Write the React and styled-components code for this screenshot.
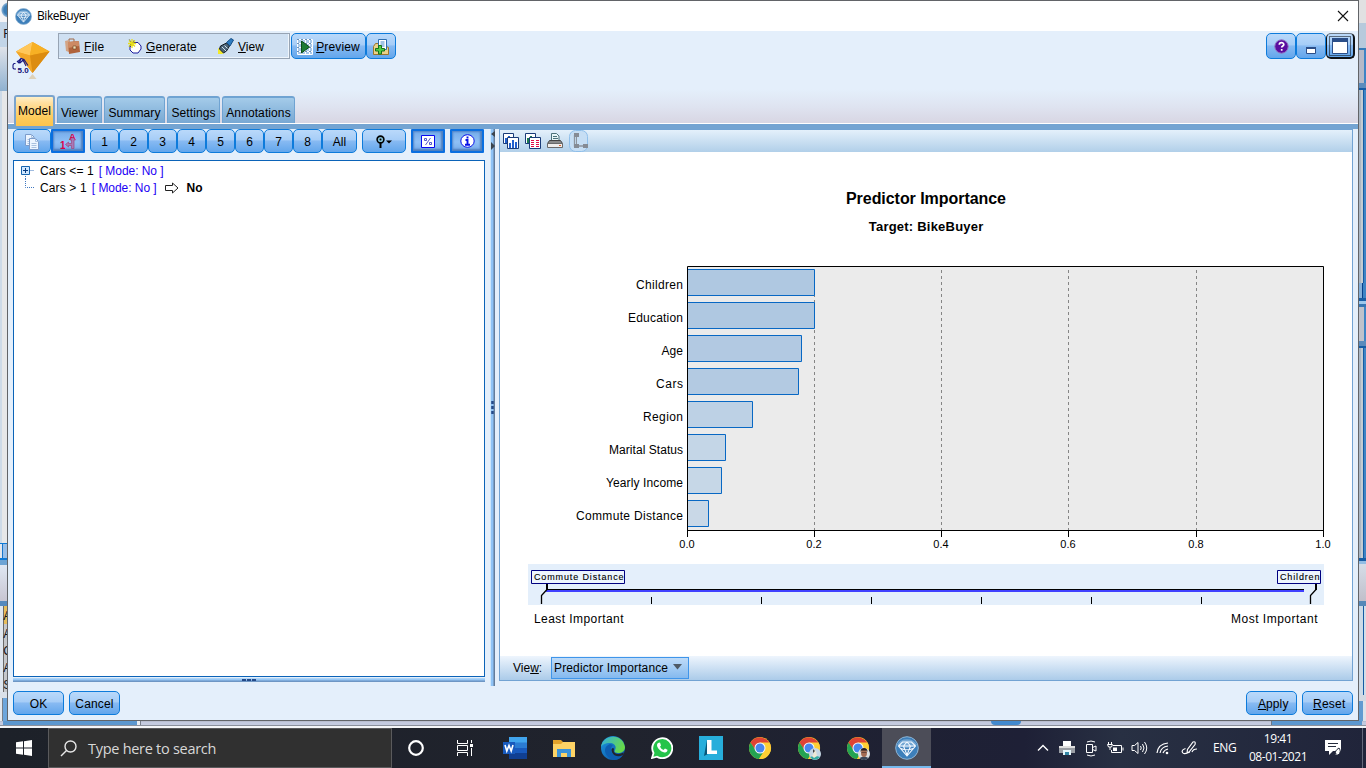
import React from "react";
import styled, { createGlobalStyle, css } from "styled-components";

const Global = createGlobalStyle`
  * { box-sizing: border-box; }
  html, body { margin: 0; padding: 0; overflow: hidden; }
  body { width: 1366px; height: 768px; background: #c6cbdd; }
  svg { display: block; flex: none; }
  button { margin: 0; }
`;

const ui = `"Liberation Sans", Arial, sans-serif`;
const segoe = `"Open Sans", "Noto Sans", sans-serif`;

const Desktop = styled.div`
  width: 1366px;
  height: 768px;
  display: grid;
  grid-template: 721px 7px 40px / 7px 1352px 7px;
  font: 12px/16px ${ui};
  color: #000;
`;

/* ---- slices of the main window left visible round the dialog ---- */
const Strip = styled.div`
  display: flex;
  flex-direction: column;
  overflow: hidden;
  ${(p) => p.$right && css`box-shadow: inset 1px 0 0 #59626e;`}
`;
const Slice = styled.div`
  flex: none;
  height: ${(p) => p.$h}px;
  background: ${(p) => p.$bg};
  color: #12151c;
  overflow: hidden;
  line-height: ${(p) => (p.$h > 20 ? 24 : 20)}px;
`;
const BottomStrip = styled.div`
  grid-column: 1 / 4;
  display: flex;
  height: 7px;
  border-bottom: 2px solid #f4f5f8;
  background: linear-gradient(#b9bed0 0 1px, #c4cadf 1px 4px, #8b909c 4px 5px);
`;
const BottomPiece = styled.i`
  width: ${(p) => p.$w}px;
  height: ${(p) => (p.$fill ? 4 : 5)}px;
  background: ${(p) => p.$fill || "transparent"};
  border-radius: ${(p) => (p.$round ? "0 0 5px 5px" : 0)};
`;

/* ---- dialog ---- */
const Dialog = styled.section`
  display: flex;
  flex-direction: column;
  border: 1px solid #626468;
  background: #e4effb;
`;
const TitleBar = styled.header`
  height: 30px;
  display: flex;
  align-items: center;
  background: #fff;
  padding: 0 9px 0 7px;
  font: 12px/16px ${segoe};
  letter-spacing: -0.45px;
  gap: 5px;
`;
const Spacer = styled.span`
  flex: 1;
`;
const Banner = styled.div`
  height: 93px;
  display: flex;
  flex-direction: column;
  border-bottom: 1px solid #fff;
  background: linear-gradient(#e4effb 0 58px, #dfe4f1 75px, #d8d6e3 92px);
`;
const CommandRow = styled.div`
  height: 64px;
  display: flex;
  align-items: flex-start;
  padding: 2px 3px 0 4px;
`;
const Emblem = styled.div`
  width: 46px;
  padding-top: 6px;
`;
const MenuBar = styled.nav`
  width: 232px;
  height: 26px;
  display: flex;
  align-items: center;
  border: 1px solid #97a4b4;
  box-shadow: inset -1px -1px 0 #eef5fc;
  background: #cfe0f2;
  padding-left: 6px;
  margin-right: 1px;
`;
const MenuItem = styled.span`
  display: flex;
  align-items: center;
  gap: 4px;
  width: ${(p) => p.$w}px;
  letter-spacing: ${(p) => p.$ls || 0}px;
  line-height: 16px;

  > span {
    padding-top: 2px;
  }
`;
const raised = css`
  border: 1px solid #0d7bdb;
  border-radius: 5px;
  background: linear-gradient(#bad9fa, #a6cdf7 45%, #88baf2 50%, #62a6ec);
`;
const sunken = css`
  border: 2px solid #0b6fe0;
  border-radius: 1px;
  background: linear-gradient(#74abea, #8fc0f5 55%, #75abe9);
  box-shadow: inset 1px 1px 2px #5083c6, inset -2px -2px 2px #4f7fbd;
`;
const Button = styled.button`
  flex: none;
  width: ${(p) => p.$w}px;
  height: ${(p) => p.$h || 24}px;
  padding: ${(p) => (p.$on ? 0 : "1px 0 0")};
  display: flex;
  align-items: center;
  justify-content: center;
  gap: 3px;
  font: 12px/16px ${ui};
  color: #000;
  letter-spacing: ${(p) => p.$ls || 0}px;
  ${(p) => (p.$on ? sunken : raised)}
  ${(p) => p.$focus && css`padding: 0; border: 1px solid #101418; border-width: 1px 2px 2px 1px; border-top-color: #6d7884;`}
`;
const TabRow = styled.div`
  display: flex;
  align-items: flex-end;
  height: 28px;
  padding-left: 6px;
  gap: 2px;
`;
const Tab = styled.div`
  flex: none;
  width: ${(p) => p.$w}px;
  height: 27px;
  border: 1px solid #6fa3d2;
  border-top-width: 2px;
  border-bottom: 0;
  border-radius: 3px 3px 0 0;
  background: linear-gradient(#a4cbe9, #78a8d3);
  text-align: center;
  white-space: nowrap;
  line-height: 31px;
  letter-spacing: 0.1px;
  ${(p) =>
    p.$active &&
    css`
      height: 31px;
      margin-bottom: -3px;
      position: relative;
      border: 2px solid #7aa3cd;
      border-bottom: 0;
      background: linear-gradient(#fff0c8, #ffe0a0 20%, #fdcb5c 70%, #fdc34c);
      line-height: 28px;
    `}
`;
const Rule = styled.div`
  height: 5px;
  background: #74a4d2;
`;
const Workspace = styled.main`
  height: 557px;
  display: flex;
  padding: 0 5px;
`;
const LeftPane = styled.div`
  width: 472px;
  display: flex;
  flex-direction: column;
`;
const TreeTools = styled.div`
  display: flex;
  height: 31px;
`;
const Group = styled.div`
  display: flex;
  margin-right: 5px;
`;
const TreeBox = styled.div`
  height: 517px;
  border: 1px solid #0b63b8;
  background: #fff;
  padding: 1px 0 0 6px;
`;
const TreeRow = styled.div`
  height: 17px;
  display: flex;
  align-items: center;
  white-space: pre;
`;
const TreeLabel = styled.span`
  margin-left: 6px;
  letter-spacing: ${(p) => p.$ls || 0}px;
`;
const Mode = styled.span`
  color: #1c00f4;
  margin: 0 8px 0 5px;
  letter-spacing: -0.05px;
`;
const Result = styled.b`
  margin-left: 8px;
`;
const HSplit = styled.div`
  height: 4px;
  margin-top: 1px;
  display: flex;
  justify-content: center;
  background: linear-gradient(#b8dbfb, #8fc1f2 2px, #6e96c4 3px);
`;
const VSplit = styled.div`
  width: 5px;
  margin: 0 4px 0 5px;
  background: linear-gradient(90deg, #cbe6fc 0 1px, #8fc3f6 1px 3px, #647d9b 4px);
`;
const ChartPane = styled.div`
  flex: 1;
  height: 552px;
  display: flex;
  flex-direction: column;
  border: 1px solid #72a3d3;
  background: #fff;
`;
const ChartTools = styled.div`
  height: 22px;
  display: flex;
  align-items: center;
  padding-left: 3px;
  gap: 6px;
  background: linear-gradient(#e4f0fb, #b1cfe9);
`;
const ViewBar = styled.div`
  height: 24px;
  display: flex;
  align-items: center;
  padding-left: 13px;
  background: linear-gradient(#eef5fd, #abcbe9);
`;
const ViewLabel = styled.span`
  width: 38px;
`;
const Combo = styled.div`
  width: 138px;
  height: 22px;
  display: flex;
  align-items: center;
  justify-content: space-between;
  padding: 0 6px 0 2px;
  white-space: nowrap;
  letter-spacing: 0.14px;
  border: 1px solid #3f95ea;
  background: linear-gradient(#bfdbf8, #a2cbf4 50%, #84b9ef);
`;
const Footer = styled.footer`
  height: 34px;
  padding: 5px;
  display: flex;
  gap: 5px;
`;

/* ---- taskbar ---- */
const Taskbar = styled.footer`
  grid-column: 1 / 4;
  display: flex;
  height: 40px;
  color: #fff;
  font: 12px/18px ${segoe};
  background: linear-gradient(90deg, #1d2129, #20232d 45%, #1e2036 75%, #283043 82%, #20243a);
`;
const Cell = styled.div`
  flex: none;
  width: ${(p) => p.$w || 49}px;
  height: 40px;
  display: flex;
  align-items: center;
  justify-content: center;
  ${(p) => p.$active && css`background: #4c4d58; border-bottom: 2px solid #76b9ed; padding-top: 1px;`}
`;
const Search = styled.div`
  width: 344px;
  display: flex;
  align-items: center;
  padding: 1px 0 0 11px;
  gap: 10px;
  border: 1px solid #5a5a5c;
  background: #303030;
  color: #d8d8d8;
  font: 14.5px/20px ${segoe};
  letter-spacing: -0.28px;
`;
const Lang = styled.span`
  width: 38px;
  padding-left: 9px;
  line-height: 40px;
  letter-spacing: -0.35px;
`;
const Clock = styled.div`
  width: 72px;
  text-align: center;
  padding-top: 2px;
  letter-spacing: -0.45px;
  white-space: pre;
`;
const DesktopEdge = styled.span`
  width: 4px;
  margin-left: 10px;
  border-left: 1px solid #64687a;
`;

/* ---- drawings ---- */
const Svg = ({ w, h, children, vb, ...r }) => (
  <svg width={w} height={h} viewBox={vb || `0 0 ${w} ${h}`} fill="none" {...r}>{children}</svg>
);

const GemBadge = ({ s }) => (
  <Svg w={s} h={s} vb="0 0 24 24">
    <circle cx="12" cy="12" r="11.3" fill="#3d7fba" stroke="#8fb4d3" strokeWidth="1" />
    <path d="M2 9a11 10 0 0 1 20 0Q12 15 2 9Z" fill="#74a7d3" />
    <path d="M7.500 6h9l4 4-8.500 10L3.500 10zM3.500 10h17M12 6l-3.500 4L12 19l3.500-9zM6 12.500q6 2.500 12 0" stroke="#f2f8ff" strokeWidth="1.100" />
  </Svg>
);
const Nugget = () => (
  <Svg w={40} h={42}>
    <path d="M20.500 3 4 12.500 20.500 34z" fill="#f6a51d" />
    <path d="M20.500 3 37.500 12.500 20.500 34z" fill="#e79412" />
    <path d="M20.500 3 4 12.500l14 4z" fill="#ffc75a" />
    <path d="M20.500 3 37.500 12.500l-19.500 4z" fill="#f7b024" />
    <path d="M4 12.500l14 4 2.500 17.500z" fill="#f3a728" />
    <path d="M18 16.500l19.500-4-17 21.500z" fill="#dc8c10" />
    <path d="M20.500 35l-4 5h8z" fill="#ddd1b8" />
    <path d="M3.500 24.500H2l-1 1.500v3l1 1h2M6 22.500l3-3 3 1 4 6M9 19.500l-2 5M8 24l3-3 3 6M5 22l2 2" stroke="#181883" strokeWidth="1.100" />
    <text x="5.500" y="34" fontFamily="Liberation Sans" fontSize="8" fontWeight="700" fill="#101076">5.0</text>
  </Svg>
);
const Bag = () => (
  <Svg w={15} h={16}>
    <path d="M4 4V1h5v3" stroke="#a06a48" />
    <path d="M0 3l4-1v12l-3-1z" fill="#d3a486" />
    <path d="M3 4l11-1 1 11-11 2z" fill="#b0633c" />
    <path d="M3 4l11-1v5l-11 2z" fill="#cd8a64" />
    <path d="M8 8h3v3H8z" fill="#f0dfb5" stroke="#71401f" strokeWidth=".6" />
  </Svg>
);
const Spark = () => (
  <Svg w={14} h={15}>
    <path d="M6 3.500h4l3 3.500v3l-3 4H5l-3-3V8z" fill="#fff" stroke="#1b1b9d" />
    <path d="M4 0v9M0 4.500h8M1 1.500l6 6M7 1.500l-6 6" stroke="#e9df1d" strokeWidth="1.300" />
    <path d="M1 0l2 3M6 1l-1 3M1 8l2-3" stroke="#625f23" strokeWidth=".5" />
  </Svg>
);
const Torch = () => (
  <Svg w={16} h={16}>
    <path d="M0 10l6 5-2 1H0z" fill="#f2e929" />
    <path d="M2.500 8l6-3 3 3-3 5-3 2-4-4z" fill="#4c6478" stroke="#111b25" />
    <path d="M8.500 4.500L13 .5l2.500 1.500L12 8z" fill="#2f7cc0" stroke="#154d84" />
    <path d="M4 9l4 4M6.500 7.500l3 3" stroke="#d2e0ec" />
  </Svg>
);
const PreviewIcon = () => (
  <Svg w={16} h={16}>
    <path d="M.5.5h15v15H.5zM1 4.5h15M1 8.5h15M1 12.5h15M4.5 1v15M8.500 1v15M12.500 1v15" fill="#a9c9ea" stroke="#fff" />
    <path d="M0 .5h16M0 4.500h16M0 8.500h16M0 12.500h16" stroke="#6e91b5" strokeDasharray="2 2" />
    <path d="M4.500 2l8 6-8 6z" fill="#1c7c35" stroke="#0b4d1a" />
  </Svg>
);
const AddNode = () => (
  <Svg w={16} h={16}>
    <path d="M.5 7.500l2-3h3v3h8l2 1v7H.5z" fill="#ead28a" stroke="#9b762a" />
    <path d="M5.500.500h8v10h-8z" fill="#fff" stroke="#2c6eb0" />
    <path d="M7.500 3h4M7.500 5h4M7.500 7h4" stroke="#4589ca" />
    <path d="M5.500 6.500h3v3h3v2.500h-3v3h-3v-3h-3V9.500h3z" fill="#52cf43" stroke="#16701a" />
  </Svg>
);
const Help = () => (
  <Svg w={15} h={15}>
    <circle cx="7.500" cy="7.500" r="6.700" fill="#5a0ca0" stroke="#9176c0" />
    <path d="M5.300 5.800C5.300 2.800 9.800 3 9.800 5.500c0 1.500-2.100 1.500-2.100 3.100M7.700 10v1.700" stroke="#fff" strokeWidth="1.700" />
  </Svg>
);
const WinMin = () => (
  <Svg w={10} h={14}>
    <path d="M.5 7.500h9v6h-9z" fill="#fff" stroke="#2b4e88" />
    <path d="M0 8h10" stroke="#2b4e88" strokeWidth="2" />
  </Svg>
);
const WinMax = () => (
  <Svg w={22} h={20}>
    <path d="M.5.5h21v19H.5z" stroke="#000" strokeDasharray="1 1" />
    <path d="M3.500 2.500h15v15h-15z" fill="#fff" stroke="#2b4e88" />
    <path d="M3 2h16v4H3z" fill="#2b4e88" />
  </Svg>
);
const Pages = () => (
  <Svg w={15} h={16}>
    {[[0.5, 0.5], [4.5, 4.5]].map(([x, y]) => (
      <g key={x} transform={`translate(${x} ${y})`}>
        <path d="M0 0h6l3 3v8H0z" fill="#edf5ff" stroke="#7c9ccb" />
        <path d="M6 0v3h3M2 5h5M2 7h5M2 9h5" stroke="#a9c1df" />
      </g>
    ))}
  </Svg>
);
const Rank = () => (
  <Svg w={17} h={18}>
    <text x="0" y="16.500" fontFamily="Liberation Sans" fontSize="10" fontWeight="700" fill="#de0048">1</text>
    <text x="9" y="7.500" fontFamily="Liberation Sans" fontSize="9.500" fontWeight="700" fill="#de0048">A</text>
    <path d="M5.500 12.500l3-2.500v1.500h3V8h-1.500L13 5.500 15.500 8H14v8.500h-2.500v-3h-3V15z" fill="#a67ab8" stroke="#a0457c" strokeWidth=".7" />
  </Svg>
);
const Pin = () => (
  <Svg w={16} h={14}>
    <circle cx="4.500" cy="4.500" r="3.400" fill="#81bdd5" stroke="#000" strokeWidth="1.600" />
    <circle cx="4.500" cy="4.500" r="1" fill="#000" />
    <path d="M4.500 8v5" stroke="#000" strokeWidth="2" />
    <path d="M10 5.500h6L13 8.500z" fill="#000" />
  </Svg>
);
const Percent = () => (
  <Svg w={14} h={13}>
    <path d="M.5.5h13v12H.5z" fill="#fff" stroke="#0908ef" />
    <path d="M9.500 3l-5 7M3.500 3.500h2v2h-2zM8.500 7.500h2v2h-2z" stroke="#4444c4" strokeWidth=".9" />
  </Svg>
);
const Info = () => (
  <Svg w={15} h={14}>
    <ellipse cx="7.500" cy="7" rx="6.700" ry="6.300" fill="#fff" stroke="#0710e7" />
    <path d="M7.500 2.500v2M5.500 6h2v4.500M5 10.700h5" stroke="#0710e7" strokeWidth="1.900" />
  </Svg>
);
const Expander = () => (
  <Svg w={14} h={17}>
    <path d="M1.500 4.500h8v8h-8z" fill="#cfe7ff" stroke="#1664ae" />
    <path d="M3 8.500h5M5.500 6v5" stroke="#073c80" />
    <path d="M10.500 8.500H14" stroke="#3f77bf" strokeDasharray="1 1" />
    <path d="M5.500 14v3" stroke="#3f77bf" strokeDasharray="1 1" />
  </Svg>
);
const Elbow = () => (
  <Svg w={14} h={17}><path d="M5.500 0v8.500H14" stroke="#3f77bf" strokeDasharray="1 1" /></Svg>
);
const ResultArrow = () => (
  <Svg w={14} h={12}><path d="M.5 3.500h7V1l5.500 5-5.500 5V8.500h-7z" fill="#fff" stroke="#222" /></Svg>
);
const BarsIcon = ({ table }) => (
  <Svg w={16} h={16}>
    <path d="M.5.5h10v10H.5z" fill="#fff" stroke="#193b78" />
    <path d="M2 5h2v5H2zM5 3h2v7H5z" fill={table ? "#197b50" : "#2260ce"} />
    <path d="M4.500 4.500h11v11h-11z" fill="#fff" stroke="#193b78" />
    {table ? (
      <path d="M6 7.500h3M11 7.500h3M6 9.500h3M11 9.500h3M6 11.500h3M11 11.500h3M6 13.500h3M11 13.500h3" stroke="#e10a46" />
    ) : (
      <path d="M6 10h2v5H6zM9 7h2v8H9zM12 9h2v6h-2z" fill="#2260ce" />
    )}
  </Svg>
);
const Printer = () => (
  <Svg w={16} h={16}>
    <path d="M4.500 8V.5h5l2.500 2.500V8z" fill="#e8f6f8" stroke="#4c7179" />
    <path d="M6 3.500h4M6 5.500h5" stroke="#4c7179" />
    <path d="M2.500 7.500h11l2 3H.5z" fill="#8a8a8a" stroke="#444" />
    <path d="M.5 10.500h15v4H.5z" fill="#f0eeec" stroke="#6a6a6a" />
    <path d="M12 12.500h2" stroke="#e4622b" />
  </Svg>
);
const NodeLink = () => (
  <Svg w={20} h={22}>
    <rect x=".5" y=".5" width="18" height="21" rx="6" fill="#c6def4" stroke="#8fbfea" />
    <path d="M5.500 5v11h9" stroke="#8d949d" strokeWidth="1.300" />
    <path d="M5 3h5v4H5zM5 14h5v4H5zM14 14h5v4h-5z" fill="#858b94" />
    <path d="M7.500 7v7" stroke="#8d949d" />
  </Svg>
);

const predictors = [
  ["Children", 814.5, "#afc8e1", 47],
  ["Education", 814.5, "#afc8e1", 55],
  ["Age", 801.5, "#b2c9e2", 21.5],
  ["Cars", 798.5, "#b3cae2", 27],
  ["Region", 752.5, "#bdd1e5", 40],
  ["Marital Status", 725.5, "#c4d6e7", 74],
  ["Yearly Income", 721.5, "#c6d7e7", 77],
  ["Commute Distance", 708.5, "#c9d8e7", 107],
];
const scale = [["0.0", 687.5], ["0.2", 814.5], ["0.4", 941.5], ["0.6", 1068.5], ["0.8", 1196.5], ["1.0", 1323.5]];

const Chart = () => (
  <Svg w={852} h={504} vb="500 152 852 504" fontFamily="Liberation Sans, Arial, sans-serif" fontSize="12">
    <g fill="#000" fontWeight="700" textAnchor="middle">
      <text x="926" y="204" fontSize="16" textLength="160">Predictor Importance</text>
      <text x="926" y="231" fontSize="13" textLength="114.500">Target: BikeBuyer</text>
    </g>
    <path d="M687.500 266.500h636v264h-636z" fill="#ebebeb" />
    {scale.slice(1, 5).map(([t, x]) => (
      <path key={t} d={`M${x} 270V530`} stroke="#858585" strokeDasharray="3 3" />
    ))}
    {predictors.map(([name, x, fill, w], i) => (
      <g key={name}>
        <path d={`M687.500 ${269.5 + i * 33}H${x}v26H687.500z`} fill={fill} stroke="#0868c4" />
        <text x={683 - w} y={289 + i * 33} textLength={w} fill="#000">{name}</text>
      </g>
    ))}
    <path d="M687.500 266.500h636v264h-636z" stroke="#000" />
    {scale.map(([t, x]) => (
      <g key={t}>
        <path d={`M${x} 530v7`} stroke="#000" />
        <text x={x - 0.5} y="548" fontSize="11" textAnchor="middle" fill="#000">{t}</text>
      </g>
    ))}
    <path d="M528 564h796v41H528z" fill="#e4effb" />
    <path d="M546 589.500h758" stroke="#000" />
    <path d="M546 591h758" stroke="#4040ff" strokeWidth="2" />
    <path d="M651.500 597v7M761.500 597v7M871.500 597v7M981.500 597v7M1091.500 597v7M1201.500 597v7" stroke="#000" />
    <path d="M547 584v6M1316 584v6" stroke="#000" strokeWidth="2" />
    <path d="M547 589.500l-5.500 6V604M1316 589.500l-5.500 6V604" stroke="#000" strokeWidth="1.300" />
    <path d="M531.500 570.500h93v13h-93zM1277.500 570.500h43v13h-43z" fill="#edf5fd" stroke="#000080" />
    <g fontSize="9" fill="#000" stroke="#000" strokeWidth=".12">
      <text x="534" y="580" textLength="89.500">Commute Distance</text>
      <text x="1280" y="580" textLength="39.500">Children</text>
    </g>
    <g fill="#000">
      <text x="534" y="623" textLength="89.500">Least Important</text>
      <text x="1231" y="623" textLength="86.500">Most Important</text>
    </g>
  </Svg>
);

const Windows = () => (
  <Svg w={16} h={16}><path d="M0 2.300l7-1v6.200H0zM8 1.200L16 0v7.500H8zM0 8.500h7v6.200l-7-1zM8 8.500h8V16l-8-1.200z" fill="#fff" /></Svg>
);
const Magnifier = () => (
  <Svg w={18} h={18}><circle cx="10.500" cy="6.500" r="5.500" stroke="#e6e6e6" strokeWidth="1.400" /><path d="M6.500 10.500L1 16" stroke="#e6e6e6" strokeWidth="1.500" /></Svg>
);
const TaskView = () => (
  <Svg w={17} h={16}><path d="M.5 0v3.500h10V0M.5 16v-3.500h10V16M.5 5.500h10v5H.5zM14.500 0v3M14.500 8v8" stroke="#fff" /><path d="M13 4h3v3h-3z" fill="#fff" /></Svg>
);
const Word = () => (
  <Svg w={24} h={22}>
    <path d="M6 0h18v6H6z" fill="#41a5ee" /><path d="M6 5.500h18V11H6z" fill="#2b7cd3" /><path d="M6 11h18v5.500H6z" fill="#185abd" /><path d="M6 16h18v6H6z" fill="#103f91" />
    <path d="M0 5h12v12H0z" fill="#185abd" /><path d="M2 8l1.800 6L6 8.500 8.200 14 10 8" stroke="#fff" strokeWidth="1.600" />
  </Svg>
);
const Folder = () => (
  <Svg w={22} h={19}>
    <path d="M0 1h8l2 2h12v15H0z" fill="#e3a32b" /><path d="M0 5h8l2-2h12v15H0z" fill="#fdd365" /><path d="M4 18v-8h14v8h-4v-4H8v4z" fill="#3b93d8" />
  </Svg>
);
const Edge = () => (
  <Svg w={24} h={24}>
    <defs>
      <linearGradient id="ea" x1="0" x2="1" y1="0" y2=".4"><stop stopColor="#2faee5" /><stop offset="1" stopColor="#67d94a" /></linearGradient>
      <linearGradient id="eb" x1="0" x2="1" y1="0" y2="1"><stop stopColor="#1c99e0" /><stop offset="1" stopColor="#0b4c9c" /></linearGradient>
    </defs>
    <circle cx="12" cy="12" r="12" fill="url(#eb)" />
    <path d="M0 11C1-1 21-4 24 11c0 4-3 6-7 6-3 0-4-1-3-3 2-4-1-7-5-7-5 0-8 2-9 4z" fill="url(#ea)" />
    <path d="M9 8c-8 3-6 13 4 16 4 0 7-2 9-5-6 3-12 0-12-6 0-2 1-3 2-4z" fill="#0d5eb1" />
    <path d="M13 13c-1 3 1 5 5 5l5-1.500-1 2.500c-6 3-11 0-11.500-5 0-2 2-3 2.500-1z" fill="#202431" />
  </Svg>
);
const WhatsApp = () => (
  <Svg w={22} h={22}>
    <path d="M1 21l1.500-5A10 10 0 1 1 6 19.700z" fill="#25c44a" stroke="#fff" strokeWidth="1.800" />
    <path d="M7 6l2-.5 1 3-1 1.200q1 2.300 3.500 3.200L14 11.500l2.500 1.300c0 2-1.500 3-3 2.700C9.500 14.800 6 11 6 8q0-1.200 1-2z" fill="#fff" />
  </Svg>
);
const LApp = () => (
  <Svg w={24} h={24}><path d="M0 0h24v24H0z" fill="#27aedb" /><path d="M8 4L5 20l4-2z" fill="#07577a" /><path d="M8 4h4.500v10.500H18V18H8z" fill="#fff" /></Svg>
);
const Chrome = ({ user }) => (
  <Svg w={24} h={24}>
    <circle cx="12" cy="12" r="11" fill="#fbc926" />
    <path d="M12 12H22.800A11 11 0 0 0 2.500 6.500L7.500 14.500z" fill="#df4335" />
    <path d="M2.500 6.500A11 11 0 0 0 11 23l5.500-8.500-8 1z" fill="#24a352" />
    <path d="M12 6.500h9.500A11 11 0 0 1 11 23l6-9z" fill="#fdcf35" />
    <circle cx="12" cy="12" r="5.500" fill="#f8fafc" /><circle cx="12" cy="12" r="4.500" fill="#4886ef" />
    {user === 1 && <><circle cx="18" cy="18" r="6" fill="#c6d7e5" /><path d="M13 21q5-2 10 0a6 6 0 0 1-10 0z" fill="#33aaa1" /><path d="M16 14l3 1 1 5-3 2-2-2 2-3z" fill="#eee8d6" /><path d="M16 13l2 2-2 2z" fill="#444" /></>}
    {user === 2 && <><circle cx="18" cy="18" r="6" fill="#dde1e4" /><path d="M13.500 22q4.500-3 9 0a6 6 0 0 1-9 0z" fill="#394557" /><ellipse cx="18" cy="17" rx="3" ry="4" fill="#a46c54" /><path d="M14.500 16q0-4 3.500-4t3.500 4l-1-1.500h-5z" fill="#251c1e" /><path d="M15.500 16.500h5" stroke="#5a3c36" strokeWidth=".8" /></>}
  </Svg>
);
const tray = {
  up: <Svg w={12} h={8}><path d="M1 6.500l5-5 5 5" stroke="#fff" strokeWidth="1.400" /></Svg>,
  print: <Svg w={16} h={15}><path d="M4 0h8v5H4z" fill="#fff" /><path d="M0 5h16v7H0z" fill="#9a9ea4" /><path d="M0 5h16v2H0z" fill="#dedede" /><path d="M4 9h8v5H4z" fill="#e9f8fc" /><path d="M6 11h4v3H6z" fill="#3287a5" /></Svg>,
  cam: <Svg w={12} h={17}><path d="M2 2q4-2 8 0M2 15q4 2 8 0M1.500 4.500h6v8h-6zM7.500 7.500L11 6v5L7.500 9.500" stroke="#fff" /></Svg>,
  battery: <Svg w={17} h={14}><path d="M6 4.500h8.500v7h-10V9M16 6.500v3" stroke="#fff" /><path d="M6 6.500h4v3.500H6z" fill="#fff" /><path d="M1.500 1v2M4.500 1v2M.5 3.500h5L4.500 6h-3zM3 6v3" stroke="#fff" /></Svg>,
  sound: <Svg w={17} h={14}><path d="M1 4.500h2.500L7 1.500v11L3.500 9.500H1zM9.500 5q1.500 2 0 4M11.500 3q3 4 0 8M13.500 1q4.500 6 0 12" stroke="#fff" /></Svg>,
  wifi: <Svg w={14} h={14}><path d="M1 12Q2 3 12 2M4 12q1-6 8-7M7 12q1-3 5-4" stroke="#fff" strokeWidth="1.200" /><circle cx="11" cy="12" r="1.300" fill="#fff" /></Svg>,
  pen: <Svg w={17} h={16}><path d="M4.500 8.500Q0 10 1.500 12.500T8 12l6-7.500q1-3.500-2-2.500L6.500 9.500 6 13l3-1M11 12q1-3 5-3" stroke="#fff" strokeWidth="1.200" /></Svg>,
  note: <Svg w={16} h={16}><path d="M0 0h16v11H8l-4 4v-4H0z" fill="#fff" /><path d="M3 3.500h10M3 6.500h8" stroke="#242b3c" /><path d="M11 14q-2-3 3-6 3 4-1 7h-3" fill="#fff" stroke="#242b3c" /></Svg>,
};

const leftSlices = [
  [22, "radial-gradient(circle at 9px 10px, #3b7cb5 0 5px, #7ca8cf 7px, #f3f3f5 8px)"],
  [25, "#c2d5e8", "\u00a0F"],
  [44, "linear-gradient(#dfe3ea, #8fb1d0)"],
  [452, "linear-gradient(90deg, #cddae8 0 2px, #e6e7e9 2px)"],
  [1, "#0d79d6"], [14, "linear-gradient(90deg, #e2e6ed 0 2px, #1776cc 2px 3px, #98bfe9 3px)"], [2, "#0d79d6"],
  [5, "#6da4d5"],
  [36, "linear-gradient(#dfe7f3, #c8c5d2)"],
  [5, "#5589bd"],
  [18, "linear-gradient(90deg, #dfe6ef 0 3px, #696969 3px 4px, #e7bd5c 4px)", "\u00a0A"],
  ...["A", "C", "A", "S"].map((t) => [17, "linear-gradient(90deg, #dfe6ef 0 3px, #696969 3px 4px, #c5c7cb 4px)", "\u00a0" + t]),
  [6, "#d9e0e9"],
  [30, "linear-gradient(90deg, #e3e7ed 0 2px, #777f8a 2px 3px, #6da6dc 3px)"],
];
const edge = "#155ca4 4px 5px, #3d84c5 5px";
const rightSlices = [
  [23, "#e1e1e2"], [25, "#b7cadc"], [2, "#347ab8"],
  [33, "linear-gradient(90deg, #b4bac8 0 5px, #3d84c5 5px)"],
  [5, "#5c8dbd"], [2, "#145ca5"],
  [193, `linear-gradient(90deg, #aab7c4 0 2px, #c4cbd1 2px 4px, ${edge})`],
  [15, "linear-gradient(90deg, #83afd9 0 3px, #083f88 3px 4px, #3d84c5 4px)"],
  [3, "#165ca4"], [3, "#9dc8ec"], [3, "#3675b2"],
  [34, "linear-gradient(90deg, #bfc2cb 0 5px, #3d84c5 5px)"],
  [5, "#5a8bbc"], [2, "#155ca4"],
  [210, `linear-gradient(90deg, #aab7c4 0 2px, #c4cbd1 2px 4px, ${edge})`],
  [3, "#165ca4"], [3, "#93bde4"],
  [37, "linear-gradient(#d5dde8, #c1bfca)"],
  [5, "#5688b8"],
  [89, "linear-gradient(90deg, #ccdae7 0 4px, #155ca4 4px 5px, #d5dde7 5px)"],
  [6, "#d3d9e2"], [20, "linear-gradient(90deg, #619bd1 0 4px, #dfe2e8 4px)"],
];

export default function App() {
  return (
    <>
      <Global />
      <Desktop>
        <Strip>{leftSlices.map(([h, bg, t], i) => <Slice key={i} $h={h} $bg={bg}>{t}</Slice>)}</Strip>
        <Dialog>
          <TitleBar>
            <GemBadge s={17} />
            <span>BikeBuyer</span>
            <Spacer />
            <Svg w={12} h={12}><path d="M1 1l10 10M11 1L1 11" stroke="#111" strokeWidth="1.100" /></Svg>
          </TitleBar>
          <Banner>
            <CommandRow>
              <Emblem><Nugget /></Emblem>
              <MenuBar>
                <MenuItem $w={63} $ls={0.3}><Bag /><span><u>F</u>ile</span></MenuItem>
                <MenuItem $w={90} $ls={0.1}><Spark /><span><u>G</u>enerate</span></MenuItem>
                <MenuItem $w={60}><Torch /><span><u>V</u>iew</span></MenuItem>
              </MenuBar>
              <Button $w={75} $h={26} $ls={0.15}><PreviewIcon /><span><u>P</u>review</span></Button>
              <Button $w={30} $h={26}><AddNode /></Button>
              <Spacer />
              <Button $w={30} $h={26}><Help /></Button>
              <Button $w={30} $h={26}><WinMin /></Button>
              <Button $w={29} $h={26} $focus><WinMax /></Button>
            </CommandRow>
            <TabRow>
              <Tab $w={41} $active>Model</Tab>
              <Tab $w={45}>Viewer</Tab>
              <Tab $w={61}>Summary</Tab>
              <Tab $w={53}>Settings</Tab>
              <Tab $w={73}>Annotations</Tab>
            </TabRow>
          </Banner>
          <Rule />
          <Workspace>
            <LeftPane>
              <TreeTools>
                <Group>
                  <Button $w={38}><Pages /></Button>
                  <Button $w={34} $on><Rank /></Button>
                </Group>
                <Group>
                  {[1, 2, 3, 4, 5, 6, 7, 8].map((n) => <Button key={n} $w={29}>{n}</Button>)}
                  <Button $w={35}>All</Button>
                </Group>
                <Group><Button $w={44}><Pin /></Button></Group>
                <Group><Button $w={34} $on><Percent /></Button></Group>
                <Button $w={34} $on><Info /></Button>
              </TreeTools>
              <TreeBox>
                <TreeRow><Expander /><TreeLabel $ls={0.12}>Cars &lt;= 1</TreeLabel><Mode>[ Mode: No ]</Mode></TreeRow>
                <TreeRow><Elbow /><TreeLabel $ls={0.14}>Cars &gt; 1</TreeLabel><Mode>[ Mode: No ]</Mode><ResultArrow /><Result>No</Result></TreeRow>
              </TreeBox>
              <HSplit>
                <Svg w={14} h={4}><path d="M0 2h4M5 2h4M10 2h4" stroke="#244a88" strokeWidth="2" /></Svg>
              </HSplit>
            </LeftPane>
            <VSplit>
              <Svg w={5} h={300}>
                <path d="M5 2v6L1 5zM1 13l4 4-4 4z" fill="#3c444d" />
                <path d="M2.500 272v3M2.500 277v3M2.500 282v3" stroke="#244a88" strokeWidth="2.500" />
              </Svg>
            </VSplit>
            <ChartPane>
              <ChartTools><BarsIcon /><BarsIcon table /><Printer /><NodeLink /></ChartTools>
              <Chart />
              <ViewBar>
                <ViewLabel>Vie<u>w</u>:</ViewLabel>
                <Combo>
                  <span>Predictor Importance</span>
                  <Svg w={9} h={8}><path d="M0 0h9L4.500 5.500z" fill="#4f5a66" /></Svg>
                </Combo>
              </ViewBar>
            </ChartPane>
          </Workspace>
          <Footer>
            <Button $w={51}>OK</Button>
            <Button $w={51} $ls={0.15}>Cancel</Button>
            <Spacer />
            <Button $w={51} $ls={0.1}><span>&nbsp;<u>A</u>pply</span></Button>
            <Button $w={51} $ls={0.2}><span>&nbsp;<u>R</u>eset</span></Button>
          </Footer>
        </Dialog>
        <Strip $right>{rightSlices.map(([h, bg], i) => <Slice key={i} $h={h} $bg={bg} />)}</Strip>
        <BottomStrip>
          <BottomPiece $w={3} /><BottomPiece $w={134} $fill="#5c97cf" /><BottomPiece $w={3} $fill="#e8ebf1" /><BottomPiece $w={1} $fill="#777e8a" />
          <BottomPiece $w={850} /><BottomPiece $w={30} $fill="#4289ce" $round /><BottomPiece $w={250} />
          <BottomPiece $w={1} $fill="#6c7684" /><BottomPiece $w={90} $fill="#5c97cf" />
        </BottomStrip>
        <Taskbar>
          <Cell $w={48}><Windows /></Cell>
          <Search><Magnifier /><span>Type here to search</span></Search>
          <Cell $w={48}><Svg w={16} h={16}><circle cx="8" cy="8" r="6.800" stroke="#fff" strokeWidth="2.200" /></Svg></Cell>
          <Cell $w={50}><TaskView /></Cell>
          <Cell><Word /></Cell>
          <Cell><Folder /></Cell>
          <Cell><Edge /></Cell>
          <Cell><WhatsApp /></Cell>
          <Cell><LApp /></Cell>
          <Cell><Chrome /></Cell>
          <Cell><Chrome user={1} /></Cell>
          <Cell><Chrome user={2} /></Cell>
          <Cell $active><GemBadge s={24} /></Cell>
          <Spacer />
          {["up", "print", "cam", "battery", "sound", "wifi"].map((k) => <Cell key={k} $w={24}>{tray[k]}</Cell>)}
          <Cell $w={29}>{tray.pen}</Cell>
          <Lang>ENG</Lang>
          <Clock>{"19:41\n08-01-2021"}</Clock>
          <Cell $w={38}>{tray.note}</Cell>
          <DesktopEdge />
        </Taskbar>
      </Desktop>
    </>
  );
}
